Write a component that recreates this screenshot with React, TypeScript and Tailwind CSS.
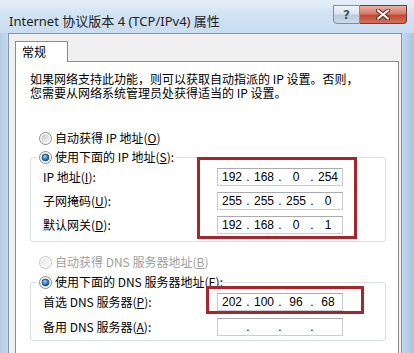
import React from "react";

function Radio({ checked, disabled }: { checked?: boolean; disabled?: boolean }) {
  return (
    <svg width="13" height="13" viewBox="0 0 13 13" className="shrink-0">
      <defs>
        <linearGradient id="rbg" x1="0" y1="0" x2="1" y2="1">
          <stop offset="0" stopColor="#c9c9c9" />
          <stop offset="1" stopColor="#f4f4f4" />
        </linearGradient>
        <linearGradient id="rbgd" x1="0" y1="0" x2="1" y2="1">
          <stop offset="0" stopColor="#e4e4e4" />
          <stop offset="1" stopColor="#fafafa" />
        </linearGradient>
        <radialGradient id="rdot" cx="0.4" cy="0.35" r="0.75">
          <stop offset="0" stopColor="#9ad3ff" />
          <stop offset="0.55" stopColor="#2f7cc4" />
          <stop offset="1" stopColor="#163f6c" />
        </radialGradient>
      </defs>
      <circle cx="6.5" cy="6.5" r="6" fill="#fbfbfb" stroke={disabled ? "#c4c4c4" : "#8c8c8c"} strokeWidth="1" />
      <circle cx="6.5" cy="6.5" r="4.3" fill={disabled ? "url(#rbgd)" : "url(#rbg)"} />
      {checked && <circle cx="6.5" cy="6.5" r="3.4" fill="url(#rdot)" stroke="#1d4a78" strokeWidth="0.8" />}
    </svg>
  );
}

function U({ c }: { c: string }) {
  return <span className="underline underline-offset-[1px]">{c}</span>;
}

function IpField({ v }: { v: string[] }) {
  return (
    <div className="w-[126px] h-[18px] border border-[#c9ccd1] border-t-[#a9abb0] bg-white flex items-center font-['Liberation_Sans',sans-serif] text-[12px] leading-[16px] text-black">
      <span className="w-[28px] text-center">{v[0]}</span>
      <span className="w-[4px] text-center">.</span>
      <span className="w-[28px] text-center">{v[1]}</span>
      <span className="w-[4px] text-center">.</span>
      <span className="w-[28px] text-center">{v[2]}</span>
      <span className="w-[4px] text-center">.</span>
      <span className="w-[28px] text-center">{v[3]}</span>
    </div>
  );
}

function Row({ label, v }: { label: React.ReactNode; v: string[] }) {
  return (
    <div className="flex items-center h-[18px]">
      <div className="w-[174px] whitespace-nowrap">{label}</div>
      <IpField v={v} />
    </div>
  );
}

export default function App() {
  return (
    <div className="relative w-[414px] h-[353px] overflow-hidden flex flex-col bg-[linear-gradient(90deg,#b4cce6_0%,#c6daef_2%,#cfe0f2_50%,#c4d8ee_97%,#a9c4e2_100%)] font-['Noto_Sans_CJK_SC',sans-serif] text-[12px] text-black">
      {/* title bar */}
      <div className="h-[33px] shrink-0 flex items-start bg-[linear-gradient(180deg,#e6eff9_0%,#d3e3f4_40%,#c9dcf1_100%)]">
        <div className="mt-[13px] ml-[9px] leading-[17px] text-[13px] text-[#1e1e1e] whitespace-nowrap font-['Noto_Sans','Noto_Sans_CJK_SC',sans-serif]">
          Internet 协议版本 4 (TCP/IPv4) 属性
        </div>
        <div className="ml-auto mr-[7px] mt-[5px] flex">
          <div className="w-[27px] h-[19px] rounded-bl-[4px] border border-[#7d8ea3] bg-[linear-gradient(180deg,#f1f5fa_0%,#dbe4ef_45%,#bccbdc_55%,#cdd9e7_100%)] flex items-center justify-center">
            <span className="font-['DejaVu_Sans',sans-serif] font-bold text-[12px] leading-none text-[#44566c]">?</span>
          </div>
          <div className="w-[47px] h-[19px] rounded-br-[4px] border border-l-0 border-[#7a3a35] bg-[linear-gradient(180deg,#eab1a4_0%,#d87a69_45%,#c24a36_55%,#d1705a_100%)] flex items-center justify-center">
            <svg width="14" height="11" viewBox="0 0 14 11">
              <path d="M2 1.5 L12 9.5 M12 1.5 L2 9.5" stroke="#5a2620" strokeWidth="4" strokeLinecap="round" />
              <path d="M2 1.5 L12 9.5 M12 1.5 L2 9.5" stroke="#ffffff" strokeWidth="2.2" strokeLinecap="round" />
            </svg>
          </div>
        </div>
      </div>

      {/* client area */}
      <div className="flex-1 ml-[8px] w-[394px] bg-[#f0f0f0] border-l border-t border-r border-[#8196b0] pt-[7px] pl-[6px] flex flex-col">
        <div className="relative z-10 w-[53px] h-[21px] -mb-px bg-white border border-b-0 border-[#898c95] pl-[6px] leading-[19px] text-[12px]">
          常规
        </div>
        <div className="flex-1 w-[384px] bg-white border border-b-0 border-[#898c95] pt-[10px] pl-[14px] flex flex-col">
          <div className="flex flex-col whitespace-nowrap">
            <div className="h-[14px] leading-[14px]">如果网络支持此功能，则可以获取自动指派的 IP 设置。否则，</div>
            <div className="h-[14px] leading-[14px]">您需要从网络系统管理员处获得适当的 IP 设置。</div>
          </div>

          <div className="mt-[29px] ml-[9px] h-[18px] flex items-center gap-[3px]">
            <Radio />
            <span>自动获得 IP 地址(<U c="O" />)</span>
          </div>

          <fieldset className="mt-[1px] w-[356px] border border-[#d5dfe5] rounded-[3px]">
            <legend className="ml-[6px] px-[2px] h-[18px] flex items-center gap-[3px]">
              <Radio checked />
              <span>使用下面的 IP 地址(<U c="S" />):</span>
            </legend>
            <div className="pl-[12px] pt-[2px] pb-[7px] flex flex-col gap-[6px]">
              <Row label={<>IP 地址(<U c="I" />):</>} v={["192", "168", "0", "254"]} />
              <Row label={<>子网掩码(<U c="U" />):</>} v={["255", "255", "255", "0"]} />
              <Row label={<>默认网关(<U c="D" />):</>} v={["192", "168", "0", "1"]} />
            </div>
          </fieldset>

          <div className="mt-[11px] ml-[9px] h-[18px] flex items-center gap-[3px] text-[#a0a0a0]">
            <Radio disabled />
            <span>自动获得 DNS 服务器地址(<U c="B" />)</span>
          </div>

          <fieldset className="mt-[2px] w-[356px] border border-[#d5dfe5] rounded-[3px]">
            <legend className="ml-[6px] px-[2px] h-[18px] flex items-center gap-[3px]">
              <Radio checked />
              <span>使用下面的 DNS 服务器地址(<U c="E" />):</span>
            </legend>
            <div className="pl-[12px] pt-[2px] pb-[4px] flex flex-col gap-[7px]">
              <Row label={<>首选 DNS 服务器(<U c="P" />):</>} v={["202", "100", "96", "68"]} />
              <Row label={<>备用 DNS 服务器(<U c="A" />):</>} v={["", "", "", ""]} />
            </div>
          </fieldset>
        </div>
      </div>

      {/* annotation boxes */}
      <div className="absolute left-[197px] top-[157px] w-[160px] h-[82px] border-[3px] border-[#a5272d]" />
      <div className="absolute left-[206px] top-[286px] w-[158px] h-[28px] border-[3px] border-[#a5272d]" />
    </div>
  );
}
